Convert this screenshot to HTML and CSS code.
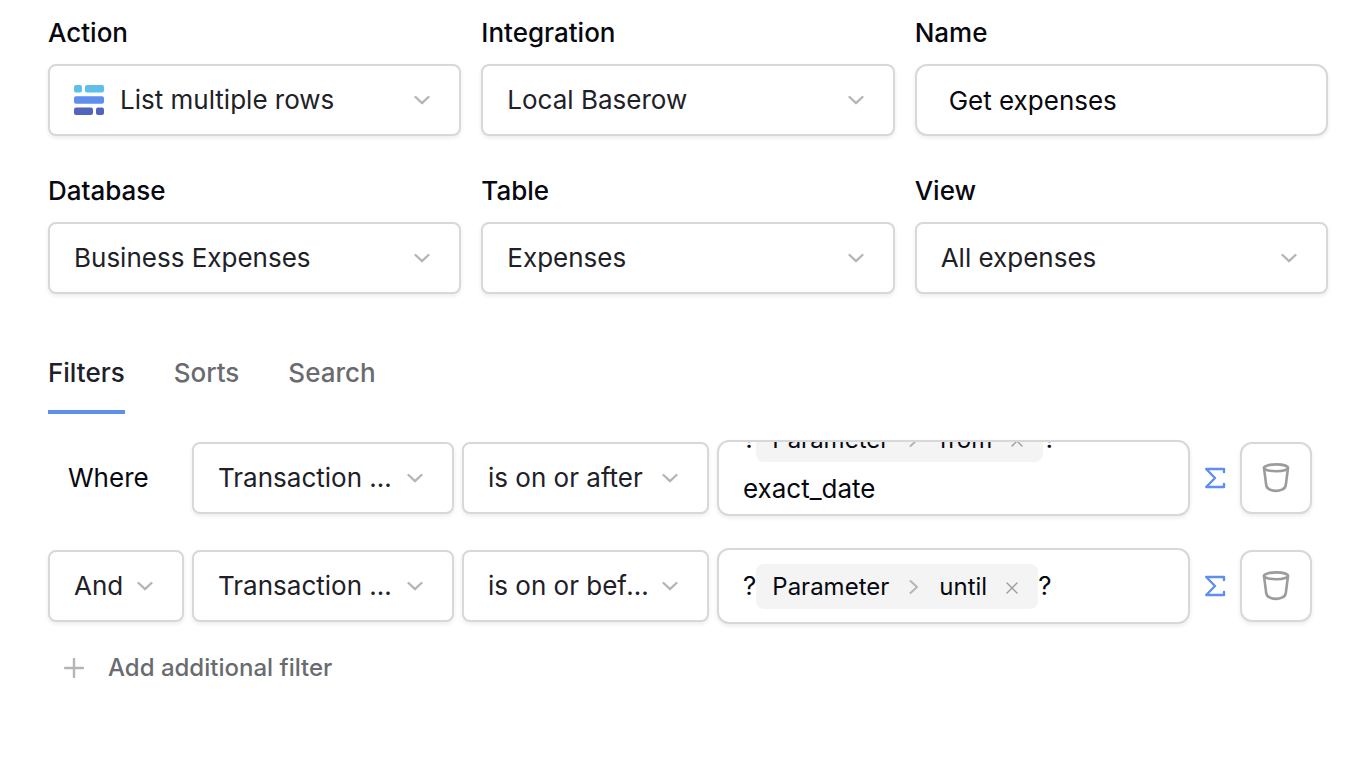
FILE: index.html
```html
<!DOCTYPE html>
<html lang="en">
<head>
    <meta charset="UTF-8">
    <meta name="viewport" content="width=device-width, initial-scale=1.0">
    <title>Get expenses - Data source</title>
    <link rel="stylesheet" href="styles.css">
</head>
<body>
    <svg class="sprite" aria-hidden="true">
        <symbol id="chevron" viewBox="0 0 16 16">
            <path d="M1.500 5 8 11.200l6.500-6.200" />
        </symbol>
        <symbol id="sigma" viewBox="0 0 22 22">
            <path d="M20 5V2H2.200l8.800 9-8.800 9H20v-3" />
        </symbol>
        <symbol id="bin" viewBox="0 0 28 30">
            <ellipse cx="14" cy="4.800" rx="12" ry="3.400" />
            <path d="M2 5l2.200 17c.3 2.300 1.400 3.500 3.300 4.300 4 1.900 9 1.900 13 0 1.900-.8 3-2 3.300-4.300L26 5" />
        </symbol>
    </svg>

    <form class="data-source">
        <div class="fields">
            <div class="field">
                <label class="label" for="action">Action</label>
                <div class="dropdown dropdown-icon">
                    <svg class="logo" viewBox="0 0 30 30" aria-hidden="true">
                        <rect x="0" y="0" width="8" height="7.500" rx="2" fill="#5ebfeb" />
                        <rect x="11" y="0" width="19" height="7.500" rx="2" fill="#5ebfeb" />
                        <rect x="0" y="11.300" width="30" height="7.500" rx="2" fill="#5e8fee" />
                        <rect x="0" y="22.500" width="19" height="7.500" rx="2" fill="#5164be" />
                        <rect x="22" y="22.500" width="8" height="7.500" rx="2" fill="#5164be" />
                    </svg>
                    <select id="action"><option>List multiple rows</option></select>
                    <svg class="chevron" aria-hidden="true"><use href="#chevron" /></svg>
                </div>
            </div>
            <div class="field">
                <label class="label" for="integration">Integration</label>
                <div class="dropdown">
                    <select id="integration"><option>Local Baserow</option></select>
                    <svg class="chevron" aria-hidden="true"><use href="#chevron" /></svg>
                </div>
            </div>
            <div class="field">
                <label class="label" for="name">Name</label>
                <input class="input" id="name" type="text" value="Get expenses">
            </div>
            <div class="field">
                <label class="label" for="database">Database</label>
                <div class="dropdown">
                    <select id="database"><option>Business Expenses</option></select>
                    <svg class="chevron" aria-hidden="true"><use href="#chevron" /></svg>
                </div>
            </div>
            <div class="field">
                <label class="label" for="table">Table</label>
                <div class="dropdown">
                    <select id="table"><option>Expenses</option></select>
                    <svg class="chevron" aria-hidden="true"><use href="#chevron" /></svg>
                </div>
            </div>
            <div class="field">
                <label class="label" for="view">View</label>
                <div class="dropdown">
                    <select id="view"><option>All expenses</option></select>
                    <svg class="chevron" aria-hidden="true"><use href="#chevron" /></svg>
                </div>
            </div>
        </div>

        <nav class="tabs">
            <a class="tab active" href="#filters">Filters</a>
            <a class="tab" href="#sorts">Sorts</a>
            <a class="tab" href="#search">Search</a>
        </nav>

        <div class="filters" id="filters">
            <div class="filter">
                <span class="where">Where</span>
                <div class="dropdown">
                    <select aria-label="Field"><option>Transaction date</option></select>
                    <svg class="chevron" aria-hidden="true"><use href="#chevron" /></svg>
                </div>
                <div class="dropdown">
                    <select aria-label="Condition"><option>is on or after</option></select>
                    <svg class="chevron" aria-hidden="true"><use href="#chevron" /></svg>
                </div>
                <div class="formula scrolled" contenteditable="true" role="textbox" aria-label="Value" spellcheck="false">
                    <div class="formula-text">?<span class="chip" contenteditable="false">Parameter<svg class="chip-sep" viewBox="0 0 10 16" aria-hidden="true"><path d="M1.500 2 8 8l-6.500 6" /></svg>from<button class="chip-remove" type="button" aria-label="Remove"><svg viewBox="0 0 12 12"><path d="M1 1l10 10M11 1 1 11" /></svg></button></span>? exact_date</div>
                </div>
                <button class="sigma" type="button" aria-label="Formula"><svg><use href="#sigma" /></svg></button>
                <button class="delete" type="button" aria-label="Delete filter"><svg><use href="#bin" /></svg></button>
            </div>

            <div class="filter">
                <div class="dropdown">
                    <select aria-label="Operator"><option>And</option></select>
                    <svg class="chevron" aria-hidden="true"><use href="#chevron" /></svg>
                </div>
                <div class="dropdown">
                    <select aria-label="Field"><option>Transaction date</option></select>
                    <svg class="chevron" aria-hidden="true"><use href="#chevron" /></svg>
                </div>
                <div class="dropdown">
                    <select aria-label="Condition"><option>is on or before</option></select>
                    <svg class="chevron" aria-hidden="true"><use href="#chevron" /></svg>
                </div>
                <div class="formula" contenteditable="true" role="textbox" aria-label="Value" spellcheck="false">
                    <div class="formula-text">?<span class="chip" contenteditable="false">Parameter<svg class="chip-sep" viewBox="0 0 10 16" aria-hidden="true"><path d="M1.500 2 8 8l-6.500 6" /></svg>until<button class="chip-remove" type="button" aria-label="Remove"><svg viewBox="0 0 12 12"><path d="M1 1l10 10M11 1 1 11" /></svg></button></span>?</div>
                </div>
                <button class="sigma" type="button" aria-label="Formula"><svg><use href="#sigma" /></svg></button>
                <button class="delete" type="button" aria-label="Delete filter"><svg><use href="#bin" /></svg></button>
            </div>
        </div>

        <button class="add-filter" type="button">
            <svg viewBox="0 0 20 20" aria-hidden="true"><path d="M10 1v18M1 10h18" /></svg>
            Add additional filter
        </button>
    </form>
</body>
</html>
```

FILE: styles.css
```css
* {
    box-sizing: border-box;
}
body {
    margin: 0;
    background-color: #fff;
    color: #070810;
    font-family: Inter, 'Liberation Sans', sans-serif;
    font-size: 26px;
    line-height: 30px;
}
button,
input,
select {
    font: inherit;
    color: inherit;
    margin: 0;
}
button {
    padding: 0;
    border: none;
    background: none;
    cursor: pointer;
}
svg {
    fill: none;
    stroke-linecap: round;
    stroke-linejoin: round;
}
.sprite {
    display: none;
}
.data-source {
    padding: 18px 36px 48px 48px;
}

/* top fields */
.fields {
    display: grid;
    grid-template-columns: repeat(3, 1fr);
    gap: 40px 20px;
}
.field {
    display: flex;
    flex-direction: column;
    gap: 16px;
    min-width: 0;
}
.label {
    font-weight: 500;
}
.dropdown,
.input,
.formula,
.delete {
    border: 2px solid #d7d8d9;
    background-color: #fff;
    box-shadow: 0 2px 4px rgba(7, 8, 16, 0.08);
}
.dropdown {
    display: grid;
    align-items: center;
    height: 72px;
    border-radius: 8px;
    color: #202128;
    min-width: 0;
}
.dropdown select {
    grid-area: 1 / 1;
    appearance: none;
    width: 100%;
    height: 68px;
    padding: 0 54px 0 24px;
    border: none;
    background: none;
    text-overflow: ellipsis;
    cursor: pointer;
}
.dropdown-icon select {
    padding-left: 70px;
}
.logo {
    grid-area: 1 / 1;
    width: 30px;
    height: 30px;
    margin-left: 24px;
}
.chevron {
    grid-area: 1 / 1;
    justify-self: end;
    width: 16px;
    height: 16px;
    margin-right: 29px;
    stroke: #b5b5b7;
    stroke-width: 2.3;
    pointer-events: none;
}
.input {
    width: 100%;
    height: 72px;
    padding: 0 32px;
    border-radius: 12px;
}

/* tabs */
.tabs {
    display: flex;
    gap: 49px;
    margin-top: 64px;
}
.tab {
    padding-bottom: 22px;
    border-bottom: 4px solid transparent;
    color: #6a6b70;
    font-weight: 500;
    text-decoration: none;
}
.tab.active {
    border-color: #5e8fee;
    color: #202128;
}

/* filters */
.filters {
    display: flex;
    flex-direction: column;
    gap: 32px;
    margin-top: 26px;
    padding-right: 16px;
}
.filter {
    display: grid;
    grid-template-columns: 136px 262px 247px 1fr 34px 72px;
    align-items: center;
    gap: 8px;
}
.where {
    padding-left: 20px;
}
.formula {
    display: flex;
    align-items: center;
    height: 76px;
    padding: 0 24px;
    border-radius: 12px;
    overflow: hidden;
    outline: none;
}
.formula.scrolled {
    align-items: flex-end;
}
.formula-text {
    line-height: 50px;
}
.chip {
    display: inline-flex;
    align-items: center;
    height: 45px;
    padding: 0 16px;
    border-radius: 8px;
    background-color: #f4f4f4;
    font-size: 24px;
    line-height: 45px;
}
.chip-sep {
    width: 10px;
    height: 16px;
    margin: 0 20px;
    stroke: #b5b5b7;
    stroke-width: 2;
}
.chip-remove {
    display: flex;
    margin: 2px 4px 0 19px;
}
.chip-remove svg {
    width: 12px;
    height: 12px;
    stroke: #9c9c9f;
    stroke-width: 1.4;
}
.sigma,
.delete {
    display: flex;
    align-items: center;
    justify-content: center;
}
.sigma svg {
    width: 22px;
    height: 22px;
    stroke: #5e8fee;
    stroke-width: 2.4;
}
.delete {
    height: 72px;
    border-radius: 12px;
}
.delete svg {
    width: 28px;
    height: 30px;
    stroke: #9c9c9f;
    stroke-width: 2.6;
}
.add-filter {
    display: flex;
    align-items: center;
    gap: 24px;
    margin-top: 29px;
    padding-left: 16px;
    color: #6a6b70;
    font-size: 24px;
    font-weight: 500;
}
.add-filter svg {
    width: 20px;
    height: 20px;
    stroke: #b5b5b7;
    stroke-width: 2.4;
}
```
